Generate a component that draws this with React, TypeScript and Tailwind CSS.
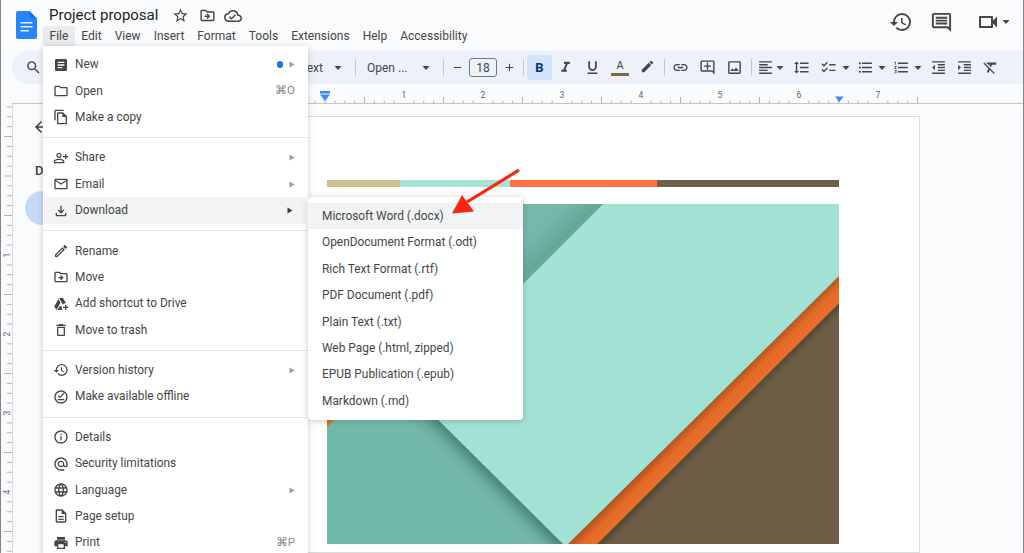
import React from "react";
import {
  MdArticle, MdOutlineFolder, MdOutlineFileCopy, MdOutlinePersonAddAlt, MdOutlineEmail, MdOutlineFileDownload,
  MdOutlineEdit, MdOutlineDriveFileMove, MdOutlineAddToDrive, MdOutlineDelete, MdHistory, MdOutlineOfflinePin,
  MdOutlineInfo, MdOutlineAlternateEmail, MdLanguage, MdOutlineDescription, MdPrint, MdSearch, MdFormatItalic,
  MdFormatUnderlined, MdEdit, MdLink, MdOutlineAddComment, MdOutlineImage, MdFormatAlignLeft, MdFormatLineSpacing,
  MdChecklist, MdFormatListBulleted, MdFormatListNumbered, MdFormatIndentDecrease, MdFormatIndentIncrease,
  MdFormatClear, MdStarBorder, MdOutlineCloudDone, MdOutlineComment, MdOutlineVideocam, MdArrowBack, MdAdd, MdRemove,
} from "react-icons/md";

type Row = { icon: React.ComponentType<{ size?: number; className?: string }>; label: string; arrow?: boolean; key?: string; dot?: boolean; active?: boolean };

const groups: Row[][] = [
  [
    { icon: MdArticle, label: "New", arrow: true, dot: true },
    { icon: MdOutlineFolder, label: "Open", key: "⌘O" },
    { icon: MdOutlineFileCopy, label: "Make a copy" },
  ],
  [
    { icon: MdOutlinePersonAddAlt, label: "Share", arrow: true },
    { icon: MdOutlineEmail, label: "Email", arrow: true },
    { icon: MdOutlineFileDownload, label: "Download", arrow: true, active: true },
  ],
  [
    { icon: MdOutlineEdit, label: "Rename" },
    { icon: MdOutlineDriveFileMove, label: "Move" },
    { icon: MdOutlineAddToDrive, label: "Add shortcut to Drive" },
    { icon: MdOutlineDelete, label: "Move to trash" },
  ],
  [
    { icon: MdHistory, label: "Version history", arrow: true },
    { icon: MdOutlineOfflinePin, label: "Make available offline" },
  ],
  [
    { icon: MdOutlineInfo, label: "Details" },
    { icon: MdOutlineAlternateEmail, label: "Security limitations" },
    { icon: MdLanguage, label: "Language", arrow: true },
    { icon: MdOutlineDescription, label: "Page setup" },
    { icon: MdPrint, label: "Print", key: "⌘P" },
  ],
];

const formats = [
  "Microsoft Word (.docx)",
  "OpenDocument Format (.odt)",
  "Rich Text Format (.rtf)",
  "PDF Document (.pdf)",
  "Plain Text (.txt)",
  "Web Page (.html, zipped)",
  "EPUB Publication (.epub)",
  "Markdown (.md)",
];

const menus = ["File", "Edit", "View", "Insert", "Format", "Tools", "Extensions", "Help", "Accessibility"];

function Caret({ className = "" }: { className?: string }) {
  return <div className={"w-2 h-1 flex-none " + className}><svg width="8" height="4" viewBox="0 0 8 4" className="block"><path d="M0.5 0h7L4 4z" fill="#444746" /></svg></div>;
}
function Sep({ className = "" }: { className?: string }) {
  return <div className={"w-px h-[17px] flex-none bg-[#c7c7c7] " + className} />;
}

function HRuler() {
  const ticks: React.ReactNode[] = [];
  for (let i = -1; i <= 60; i++) {
    const x = 325 + i * 9.875;
    if (x > 920) break;
    if (i % 8 === 0 && i !== 0) continue;
    const half = i % 4 === 0;
    ticks.push(<line key={i} x1={x} x2={x} y1={half ? 97 : 100.5} y2={103} stroke="#80868b" strokeWidth="0.6" />);
  }
  return (
    <svg width="1022" height="20" viewBox="1 84 1022 20" className="block flex-none">
      <line x1="12" x2="1024" y1="103.5" y2="103.5" stroke="#c4c7c5" />
      {ticks}
      {[1, 2, 3, 4, 5, 6, 7].map((n) => (
        <text key={n} x={325 + n * 79} y={98} fontSize="8.5" textAnchor="middle" fill="#5f6368" fontFamily="Roboto, sans-serif">{n}</text>
      ))}
      <path d="M320 91h10v2.5h-10z" fill="#4285f4" />
      <path d="M320 94.5h10l-5 6.5z" fill="#4285f4" />
      <path d="M835 96.5h8.5l-4.2 5.5z" fill="#4285f4" />
    </svg>
  );
}

function VRuler() {
  const ticks: React.ReactNode[] = [];
  for (let i = -8; i < 40; i++) {
    const y = 176 + i * 9.875;
    if (y < 104) continue;
    if (i % 8 === 0 && i > 0) continue;
    const half = i % 4 === 0;
    ticks.push(<line key={i} x1={half ? 4 : 7} x2={12} y1={y} y2={y} stroke="#80868b" strokeWidth="0.6" />);
  }
  return (
    <svg width="11" height="449" viewBox="1 104 11 449" className="block flex-none">
      {ticks}
      {[1, 2, 3, 4].map((n) => {
        const y = 176 + n * 79;
        return <text key={n} x={7} y={y} fontSize="8.5" textAnchor="middle" fill="#5f6368" fontFamily="Roboto, sans-serif" transform={`rotate(-90 7 ${y}) translate(0 3)`}>{n}</text>;
      })}
    </svg>
  );
}

function Artwork() {
  return (
    <svg width="512" height="340" viewBox="0 0 512 340" className="block">
      <defs>
        <linearGradient id="tealShade" gradientUnits="userSpaceOnUse" x1="118" y1="257" x2="135" y2="240">
          <stop offset="0" stopColor="#73b9a9" />
          <stop offset="0.5" stopColor="#6cae9f" />
          <stop offset="1" stopColor="#4a8579" />
        </linearGradient>
        <linearGradient id="tealTop" gradientUnits="userSpaceOnUse" x1="118" y1="118" x2="138" y2="138">
          <stop offset="0" stopColor="#74b9aa" />
          <stop offset="1" stopColor="#63a696" />
        </linearGradient>
        <linearGradient id="orangeShade" gradientUnits="userSpaceOnUse" x1="292" y1="292" x2="305.5" y2="305.5">
          <stop offset="0" stopColor="#b9561f" />
          <stop offset="0.4" stopColor="#e36a28" />
          <stop offset="1" stopColor="#eb6f2b" />
        </linearGradient>
        <linearGradient id="brownShade" gradientUnits="userSpaceOnUse" x1="305.5" y1="305.5" x2="311" y2="311">
          <stop offset="0" stopColor="#55482f" />
          <stop offset="1" stopColor="#6b5d46" />
        </linearGradient>
      </defs>
      <rect width="512" height="340" fill="#a2e2d4" />
      <path d="M0 0H276L0 276Z" fill="url(#tealTop)" />
      <path d="M0 196.5L45 150L59 164L0 223.5Z" fill="#ea6e2a" />
      <path d="M0 223.5L59 164L236 340H0Z" fill="url(#tealShade)" />
      <path d="M512 72L241 340H270L512 99Z" fill="url(#orangeShade)" />
      <path d="M512 99L270 340H512Z" fill="url(#brownShade)" />
    </svg>
  );
}

export default function App() {
  return (
    <div className="relative w-[1024px] h-[553px] overflow-hidden bg-[#f9fbfd] border-x border-[#80868b] flex flex-col [font-family:Roboto,sans-serif] text-[#444746]">
      {/* Header */}
      <div className="flex h-[51px] flex-none">
        <svg width="21" height="28" viewBox="0 0 21 28" className="ml-[15px] mt-[11px] flex-none">
          <path d="M2 0H13.5L21 7.5V26a2 2 0 0 1-2 2H2a2 2 0 0 1-2-2V2a2 2 0 0 1 2-2Z" fill="#2684fc" />
          <path d="M13.5 0L21 7.5H15a1.5 1.5 0 0 1-1.5-1.5Z" fill="#1a5fd0" opacity="0.55" />
          <path d="M4.5 11h12v1.6h-12zM4.5 15h12v1.6h-12zM4.5 19h8.5v1.6h-8.5z" fill="#e8f0fe" />
        </svg>
        <div className="ml-[6px] pt-[5px] flex flex-col">
          <div className="flex items-center h-[21px] pl-[6px]">
            <span className="text-[15px] leading-none text-[#1f1f1f]">Project proposal</span>
            <MdStarBorder size={17} className="ml-[14px]" />
            <MdOutlineDriveFileMove size={17} className="ml-[10px]" />
            <MdOutlineCloudDone size={18} className="ml-[8px]" />
          </div>
          <div className="flex h-[20px]">
            {menus.map((m, i) => (
              <div key={m} className={"px-[6.5px] flex items-center text-[12px] rounded-t-[3px] " + (i === 0 ? "bg-[#e8eaed]" : "")}>{m}</div>
            ))}
          </div>
        </div>
        <div className="ml-auto flex items-center h-[44px] pr-[13px]">
          <MdHistory size={24} />
          <MdOutlineComment size={23} className="ml-[17px]" />
          <MdOutlineVideocam size={24} className="ml-[23px]" />
          <Caret className="ml-[2px]" />
        </div>
      </div>

      {/* Toolbar */}
      <div className="flex items-center h-[33px] flex-none ml-[11px] pl-[13px] rounded-l-full bg-[#edf2fa] text-[12px]">
        <MdSearch size={17} className="flex-none" />
        <div className="w-[281px] text-right flex-none">Normal text</div>
        <Caret className="ml-[11px]" />
        <Sep className="ml-[13px]" />
        <div className="ml-[11px] w-[42px] flex-none whitespace-nowrap">Open ...</div>
        <Caret className="ml-[13px]" />
        <Sep className="ml-[13px]" />
        <MdRemove size={13} className="ml-[7px] flex-none" />
        <div className="ml-[5px] w-[28px] h-[19px] flex-none border border-[#747775] rounded-[3px] flex items-center justify-center text-[12px]">18</div>
        <MdAdd size={13} className="ml-[6px] flex-none" />
        <Sep className="ml-[7px]" />
        <div className="ml-[3px] w-[25px] h-[25px] flex-none rounded-[3px] bg-[#d3e3fd] flex items-center justify-center text-[13px] font-bold text-[#0b2f66]">B</div>
        <MdFormatItalic size={17} className="ml-[5px] flex-none" />
        <MdFormatUnderlined size={17} className="ml-[10px] flex-none" />
        <div className="ml-[10px] w-[18px] flex-none flex flex-col items-center pt-[1px]">
          <span className="text-[11px] leading-[12px]">A</span>
          <div className="w-[18px] h-[3px] mt-[1px] bg-[#7c6a45]" />
        </div>
        <MdEdit size={15} className="ml-[11px] flex-none -mt-[3px]" />
        <Sep className="ml-[9px]" />
        <MdLink size={17} className="ml-[7px] flex-none" />
        <MdOutlineAddComment size={17} className="ml-[10px] flex-none" />
        <MdOutlineImage size={17} className="ml-[10px] flex-none" />
        <Sep className="ml-[8px]" />
        <MdFormatAlignLeft size={17} className="ml-[5px] flex-none" />
        <Caret className="ml-[2px]" />
        <MdFormatLineSpacing size={17} className="ml-[9px] flex-none" />
        <MdChecklist size={17} className="ml-[10px] flex-none" />
        <Caret className="ml-[5px]" />
        <MdFormatListBulleted size={17} className="ml-[7px] flex-none" />
        <Caret className="ml-[4px]" />
        <MdFormatListNumbered size={17} className="ml-[7px] flex-none" />
        <Caret className="ml-[4px]" />
        <MdFormatIndentDecrease size={17} className="ml-[8px] flex-none" />
        <MdFormatIndentIncrease size={17} className="ml-[9px] flex-none" />
        <MdFormatClear size={17} className="ml-[9px] flex-none" />
      </div>

      <HRuler />

      {/* Body */}
      <div className="flex flex-1 min-h-0">
        <VRuler />
        <div className="w-[235px] flex-none border-l border-[#dadce0] flex flex-col pt-[14px] pl-[19px]">
          <MdArrowBack size={18} className="text-[#3c4043]" />
          <div className="mt-[27px] ml-[3px] text-[13px] leading-[16px] font-medium text-[#3c4043]">D</div>
          <div className="mt-[12px] -ml-[7px] w-[34px] h-[34px] flex-none rounded-full bg-[#c6d9f7] flex items-center justify-end text-[12px] text-[#0b2f66]">P</div>
        </div>
        <div className="mt-[12px] w-[673px] flex-none bg-white border border-[#dadce0] pl-[79px] pt-[63px]">
          <div className="flex w-[512px] h-[7px]">
            <div className="w-[73px] bg-[#cdbf90]" />
            <div className="w-[110px] bg-[#a5e3d5]" />
            <div className="w-[147px] bg-[#fd7240]" />
            <div className="flex-1 bg-[#6d5f49]" />
          </div>
          <div className="mt-[17px]"><Artwork /></div>
        </div>
      </div>

      {/* File menu */}
      <div className="absolute left-[42px] top-[46px] w-[265px] bg-white rounded-b-[4px] shadow-[0_1px_6px_rgba(60,64,67,0.25)] pt-[5.4px] text-[11.9px] text-[#444746]">
        {groups.map((g, gi) => (
          <div key={gi}>
            {gi > 0 && <div className="my-[6.5px] h-px bg-[#e3e5e8]" />}
            {g.map((r) => {
              const Icon = r.icon;
              return (
                <div key={r.label} className={"h-[26.4px] flex items-center pr-[13px] " + (r.active ? "bg-[#f1f3f4] ml-px mr-[2px] pl-[9px]" : "pl-[10px]")}>
                  <Icon size={16} className="flex-none" />
                  <span className="ml-[6px] pt-[1px]">{r.label}</span>
                  {r.dot && <div className="ml-auto w-[6.5px] h-[6.5px] rounded-full bg-[#1a73e8]" />}
                  {r.key && <span className="ml-auto text-[#80868b] text-[11.5px]">{r.key}</span>}
                  {r.arrow && (
                    <svg width="6" height="7" viewBox="0 0 6 7" className={(r.dot ? "ml-[6px]" : "ml-auto") + " flex-none"}>
                      <path d="M0.5 0.5L5.5 3.5L0.5 6.5Z" fill={r.active ? "#3c4043" : "#9aa0a6"} />
                    </svg>
                  )}
                </div>
              );
            })}
          </div>
        ))}
      </div>

      {/* Download submenu */}
      <div className="absolute left-[307px] top-[197px] w-[215px] bg-white rounded-[4px] shadow-[0_1px_6px_rgba(60,64,67,0.28)] pt-[6px] pb-[5.5px] text-[11.9px] text-[#444746]">
        {formats.map((f, i) => (
          <div key={f} className={"h-[26.4px] flex items-center pl-[14px] pt-[1.5px] " + (i === 0 ? "bg-[#f1f3f4]" : "")}>{f}</div>
        ))}
      </div>

      {/* Callout arrow */}
      <svg width="80" height="56" viewBox="0 0 80 56" className="absolute left-[446px] top-[164px]">
        <path d="M72 6L20 38" stroke="#f9260c" strokeWidth="3.2" fill="none" />
        <path d="M5 49.5L15 31L27 47.5Z" fill="#f9260c" />
      </svg>
    </div>
  );
}
